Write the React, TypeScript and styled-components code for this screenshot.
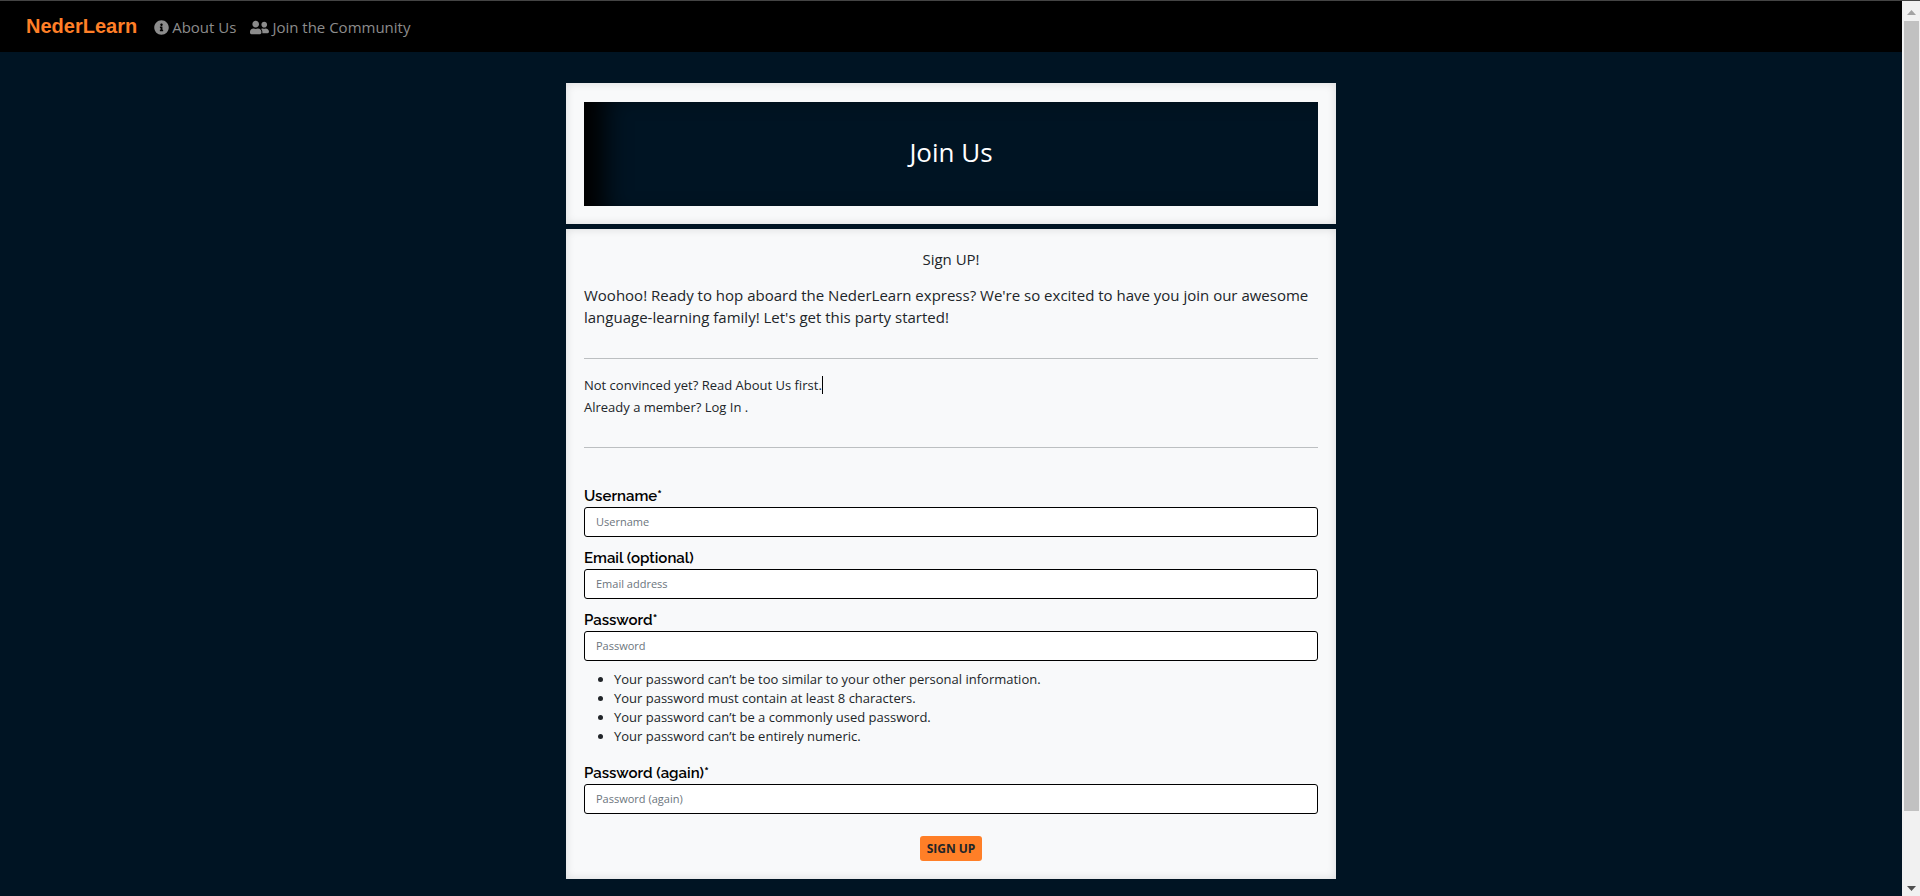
import React from "react";
import styled, { createGlobalStyle } from "styled-components";
import { FaInfoCircle, FaUserFriends } from "react-icons/fa";

const GlobalStyle = createGlobalStyle`
  *, *::before, *::after { box-sizing: border-box; }
  body {
    margin: 0;
    background: #001423;
    color: #212529;
    font-family: "Open Sans", "Noto Sans", sans-serif;
    font-size: 15px;
    line-height: 22px;
  }
  p, h1, ul { margin: 0; }
`;

const Shell = styled.div`
  display: flex;
  min-height: 100vh;
`;

const Page = styled.div`
  flex: 1;
  min-width: 0;
  display: flex;
  flex-direction: column;
`;

const Navbar = styled.nav`
  display: flex;
  align-items: center;
  gap: 14px;
  height: 52px;
  padding: 0 26px;
  background: #000;
  border-top: 1px solid #444;
`;

const Brand = styled.a`
  margin-right: 3px;
  padding-bottom: 2px;
  color: #ff7f27;
  font-family: "Liberation Sans", Arial, sans-serif;
  font-size: 20px;
  font-weight: 700;
  line-height: 30px;
  text-decoration: none;
`;

const NavLink = styled.a`
  display: flex;
  align-items: center;
  gap: 3px;
  color: #8c8c8c;
  text-decoration: none;

  svg { margin-top: 2px; }
`;

const Main = styled.main`
  flex: 1;
  width: 100%;
  max-width: 770px;
  margin: 0 auto;
  padding: 31px 0 16px;
  display: flex;
  flex-direction: column;
  gap: 5px;
`;

const Card = styled.section`
  padding: 19px 18px 18px;
  background: #f8f9fa;
  box-shadow: inset 0 0 10px rgba(0, 0, 0, 0.12);
`;

const Banner = styled.header`
  display: flex;
  align-items: center;
  justify-content: center;
  height: 104px;
  padding-bottom: 4px;
  background: #001423;
  box-shadow: inset 34px 2px 26px -14px #000;
`;

const Title = styled.h1`
  color: #fff;
  font-size: 26px;
  font-weight: 500;
  line-height: 32px;
`;

const Subtitle = styled.p`
  margin-bottom: 13px;
  line-height: 23px;
  text-align: center;
`;

const Intro = styled.p`
  && { margin-bottom: 30px; }
`;

const Rule = styled.hr`
  margin: 29px 0 15px;
  border: 0;
  border-top: 1px solid #bcbfc1;
`;

const Note = styled.p`
  font-size: 13px;
`;

const TextLink = styled.a`
  color: inherit;
  text-decoration: none;
`;

const Caret = styled.span`
  position: absolute;
  width: 1px;
  height: 18px;
  margin-top: 2px;
  background: #000;
`;

const Form = styled.form`
  display: flex;
  flex-direction: column;
  padding-top: 21px;
`;

const Field = styled.div`
  display: flex;
  flex-direction: column;
  margin-bottom: 9px;
`;

const Label = styled.label`
  padding-top: 2px;
  color: #000;
  font-family: Raleway, Lato, sans-serif;
  font-size: 15px;
  font-weight: 600;
  line-height: 21px;
`;

const Input = styled.input`
  width: 100%;
  height: 30px;
  padding: 0 11px 2px;
  border: 1px solid #000;
  border-radius: 3px;
  background: #fff;
  color: #212529;
  font-family: inherit;
  font-size: 11px;
  &::placeholder { color: #6c757d; opacity: 1; }
`;

const Hints = styled.ul`
  padding: 0 0 15px 30px;
  font-size: 13px;
  line-height: 19px;
`;

const SubmitButton = styled.button`
  align-self: center;
  height: 25px;
  margin-top: 13px;
  padding: 0 7px;
  border: 0;
  border-radius: 3px;
  background: #ff7f27;
  color: #212529;
  font-family: inherit;
  font-size: 12px;
  font-weight: 700;
  text-transform: uppercase;
`;

const ScrollTrack = styled.aside`
  display: flex;
  flex-direction: column;
  align-items: center;
  width: 18px;
  padding: 9px 0 5px;
  background: #f1f1f1;
  border-top: 1px solid #444;
`;

const ScrollThumb = styled.div`
  width: 15px;
  height: 100%;
  background: #c1c1c1;
`;

const ScrollRange = styled.div`
  flex: 1;
  padding: 6px 0 75px;
`;

const Arrow = ({ down = false }: { down?: boolean }) => (
  <svg width="9" height="5" viewBox="0 0 9 5" aria-hidden="true">
    <path d={down ? "M0 0h9L4.5 5z" : "M0 5h9L4.5 0z"} fill={down ? "#505050" : "#a3a3a3"} />
  </svg>
);

interface FormFieldProps {
  id: string;
  label: string;
  placeholder: string;
  type?: string;
}

const FormField = ({ id, label, placeholder, type = "text" }: FormFieldProps) => (
  <Field>
    <Label htmlFor={id}>{label}</Label>
    <Input id={id} name={id} type={type} placeholder={placeholder} />
  </Field>
);

const passwordHints = [
  "Your password can’t be too similar to your other personal information.",
  "Your password must contain at least 8 characters.",
  "Your password can’t be a commonly used password.",
  "Your password can’t be entirely numeric.",
];

export default function App() {
  return (
    <Shell>
      <GlobalStyle />
      <Page>
        <Navbar>
          <Brand href="#home">NederLearn</Brand>
          <NavLink href="#about"><FaInfoCircle size={15} />About Us</NavLink>
          <NavLink href="#join"><FaUserFriends size={19} />Join the Community</NavLink>
        </Navbar>
        <Main>
          <Card>
            <Banner><Title>Join Us</Title></Banner>
          </Card>
          <Card>
            <Subtitle>Sign UP!</Subtitle>
            <Intro>
              Woohoo! Ready to hop aboard the NederLearn express? We're so excited to have you
              join our awesome language-learning family! Let's get this party started!
            </Intro>
            <Rule />
            <Note>
              Not convinced yet? Read <TextLink href="#about">About Us</TextLink> first.<Caret />
            </Note>
            <Note>
              Already a member? <TextLink href="#login">Log In</TextLink> .
            </Note>
            <Rule />
            <Form onSubmit={(event) => event.preventDefault()}>
              <FormField id="username" label="Username*" placeholder="Username" />
              <FormField id="email" label="Email (optional)" placeholder="Email address" type="email" />
              <FormField id="password1" label="Password*" placeholder="Password" type="password" />
              <Hints>
                {passwordHints.map((hint) => <li key={hint}>{hint}</li>)}
              </Hints>
              <FormField id="password2" label="Password (again)*" placeholder="Password (again)" type="password" />
              <SubmitButton type="submit">Sign Up</SubmitButton>
            </Form>
          </Card>
        </Main>
      </Page>
      <ScrollTrack aria-hidden="true">
        <Arrow />
        <ScrollRange><ScrollThumb /></ScrollRange>
        <Arrow down />
      </ScrollTrack>
    </Shell>
  );
}
